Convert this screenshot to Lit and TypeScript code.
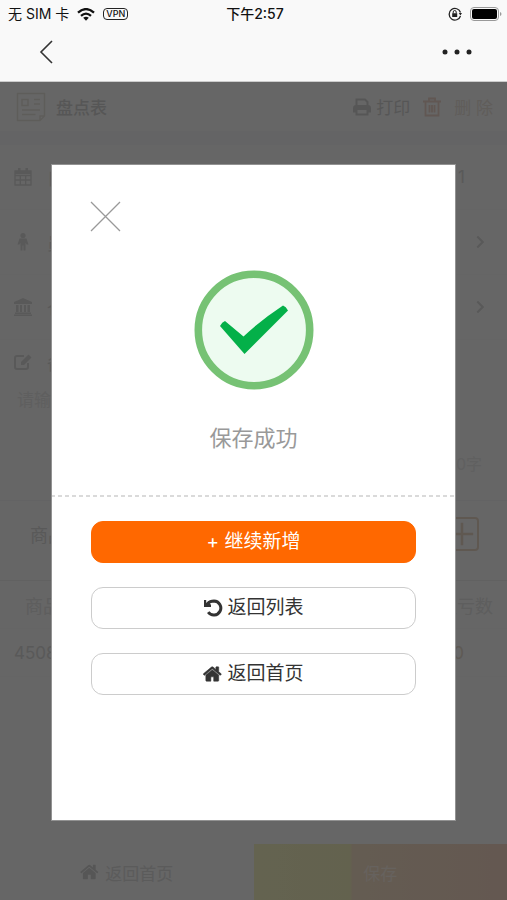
import { LitElement, html, css, svg } from "lit";
import { customElement } from "lit/decorators.js";

const homePath = svg`<path d="M1408 992v480q0 26-19 45t-45 19h-384v-384h-256v384h-384q-26 0-45-19t-19-45v-480q0-1 .5-3t.5-3l575-474 575 474q1 2 1 6zm223-69l-62 74q-8 9-21 11h-3q-13 0-21-7l-692-577-692 577q-12 8-24 7-13-2-21-11l-62-74q-8-10-7-23.5t11-21.5l719-599q32-26 76-26t76 26l244 204v-195q0-14 9-23t23-9h192q14 0 23 9t9 23v408l219 182q10 8 11 21.5t-7 23.5z"/>`;
const undoShape = svg`<path fill="none" stroke="currentColor" stroke-width="3" d="M4.500 5.800Q7 3 11 3A7 7 0 1 1 5.200 14.200"/><path d="M1 2h2.200v3L5 4.300l3 2.500V9H1z"/>`;

const icon = (shape: unknown, box = "0 0 20 20") =>
  html`<svg class="icon" viewBox=${box} aria-hidden="true">${shape}</svg>`;

const calendar = svg`<path fill="none" stroke="currentColor" stroke-width="1.300" d="M2 4h16v14H2zM2 8.500h16M7.300 8.500V18M12.700 8.500V18M2 13h16"/><path d="M5 1h2.500v5H5zM12.500 1H15v5h-2.500zM2 4h16v3H2z"/>`;
const person = svg`<circle cx="10" cy="3.500" r="2.600"/><path d="M6.500 6.500h7l2 6h-2l-1-2v8h-2v-5h-1v5h-2v-8l-1 2h-2z"/>`;
const bank = svg`<path d="M10 1l9 4v2H1V5zM3 8h2.500v7H3zM7 8h2v7H7zM11 8h2v7h-2zM14.500 8H17v7h-2.500zM2 15.500h16v1.500H2zM1 17.500h18V19H1z"/>`;
const edit = svg`<path fill="none" stroke="currentColor" stroke-width="2" d="M15 11v4q0 2-2 2H4q-2 0-2-2V6q0-2 2-2h7"/><path d="M8 10l7.500-7.500 3 3L11 13H8z"/>`;
const printer = svg`<path fill="none" stroke="currentColor" stroke-width="2" d="M4.500 9V2.500h8.500L15.500 5v4M4.500 13v4.500h11V13"/><path d="M1 11q0-3 3-3h12q3 0 3 3v4.500h-3V13H4v2.500H1z"/>`;
const trash = svg`<path fill="none" stroke="currentColor" stroke-width="1.800" d="M1 4.500h18M7 4V1.500h6V4M3.500 5v13.500h13V5M7.500 8v7.500M10 8v7.500M12.500 8v7.500"/>`;
const ledger = svg`<path fill="none" stroke="currentColor" stroke-width="1" d="M1 1h18v15l-3 3H1zM4 5h4v4H4zM12 5h4M12 8h4M4 12h12M4 15h9M19 16h-3v3"/>`;
const chevron = svg`<path fill="none" stroke="currentColor" stroke-width="2.400" d="M7 4l6 6-6 6"/>`;

@customElement("app-root")
export class AppRoot extends LitElement {
  static styles = css`
    :host {
      display: flex;
      flex-direction: column;
      min-height: 100vh;
      background: #fff;
      font-family: Inter, "Noto Sans CJK SC", sans-serif;
      font-size: 17px;
      color: #333;
    }
    * { box-sizing: border-box; }
    button, textarea {
      font: inherit;
      color: inherit;
      background: none;
      border: 0;
      padding: 0;
      margin: 0;
    }
    button { cursor: pointer; display: flex; align-items: center; justify-content: center; }
    .icon { width: 20px; height: 20px; fill: currentColor; flex: none; display: block; }

    .status {
      display: grid;
      grid-template-columns: 1fr auto 1fr;
      align-items: center;
      height: 28px;
      padding: 0 5px 0 8px;
      background: #f9f9f9;
      color: #111;
      font-size: 14px;
      line-height: 20px;
    }
    .carrier, .power { display: flex; align-items: center; gap: 8px; }
    .power { justify-content: flex-end; }
    .clock { font-weight: 500; }
    .wifi { width: 18px; height: 13px; }
    .vpn {
      border: 1px solid #222;
      border-radius: 4px;
      padding: 0 2px;
      font-size: 9px;
      line-height: 10px;
      font-weight: 500;
    }
    .lock { width: 14px; height: 14px; }
    .battery { width: 32px; height: 14px; }

    .nav {
      display: flex;
      align-items: center;
      justify-content: space-between;
      height: 54px;
      padding: 0 34px 6px 38px;
      background: #f9f9f9;
      border-bottom: 1px solid #ccc;
    }
    .back svg { width: 16px; height: 26px; display: block; }
    .more svg { width: 32px; height: 10px; display: block; }

    .stage { flex: 1; display: grid; }
    .page, .backdrop { grid-area: 1 / 1; min-width: 0; }
    .page { display: flex; flex-direction: column; background: #fff; color: #dedede; }
    .backdrop { position: relative; display: grid; background: rgba(0, 0, 0, 0.6); }

    .title {
      display: flex;
      align-items: center;
      height: 49px;
      padding: 0 14px;
      gap: 8px;
      color: #d8d8d8;
    }
    .title h1 { flex: 1; margin: 0; font-size: 17px; font-weight: 500; }
    .ledger { color: #ece8e2; }
    .ledger .icon { width: 34px; height: 30px; }
    .tool { gap: 4px; }
    .delete { margin-left: 4px; gap: 12px; color: #f2dacf; }
    .delete-text { color: #f0e8e2; }
    .band { height: 14px; background: #fafafd; }

    .row {
      display: flex;
      align-items: center;
      gap: 14px;
      height: 65px;
      padding: 0 18px 0 13px;
      border-bottom: 1px solid #fdfdfd;
    }
    .row .name { flex: 1; }
    .row .chevron .icon { width: 18px; height: 18px; }
    .date { padding-right: 42px; }
    .note { height: 44px; border: 0; }
    textarea { resize: none; display: block; width: 100%; height: 68px; padding: 4px 17px; line-height: 24px; }
    textarea::placeholder { color: #ededed; opacity: 1; }
    .count { padding: 0 25px 0 0; text-align: right; line-height: 24px; color: #efefef; font-size: 16px; }

    .goods {
      display: flex;
      align-items: center;
      justify-content: space-between;
      height: 66px;
      margin-top: 24px;
      padding: 0 28px 0 30px;
      border-top: 1px solid #f8f8fb;
    }
    .goods h2 { margin: 0; font-size: 18px; font-weight: 400; }
    .add {
      width: 34px;
      height: 34px;
      border: 2px solid #eedccb;
      border-radius: 4px;
      color: #eedccb;
    }
    .add .icon { width: 28px; height: 28px; }
    table { width: 100%; margin-top: 14px; border-top: 1px solid #f2f2f2; border-collapse: collapse; }
    th, td { height: 48px; padding: 0 14px; font-weight: 400; text-align: left; border-bottom: 1px solid #fcfcfc; }
    th { color: #eaeaea; padding-left: 25px; font-size: 18px; }
    .end { text-align: right; }
    td.end { padding-right: 43px; color: #eae0d2; }

    .footer { display: grid; grid-template-columns: 1fr 1fr; height: 56px; margin-top: auto; color: #e4e4e4; }
    .footer button { gap: 5px; }
    .footer .icon { color: #d8d8d8; }
    .footer .save { background: linear-gradient(90deg, #f9f8c8, #f8f4c4 38%, #fbe6cc 39%, #fbdccb); color: #fff4ea; }

    .modal {
      display: flex;
      flex-direction: column;
      margin: 82px 10% 79px;
      background: #fff;
      outline: 1px solid #929292;
      outline-offset: -1px;
    }
    .result {
      display: flex;
      flex-direction: column;
      align-items: center;
      padding: 36px 0 43px;
      background: repeating-linear-gradient(90deg, #dadada 0 4px, #fff 4px 7px) bottom / 100% 2px no-repeat;
    }
    .close { align-self: flex-start; margin-left: 38px; }
    .close svg { width: 32px; height: 32px; display: block; }
    .check { width: 120px; height: 120px; margin: 38px 0 32px; }
    .message { margin: 0; font-size: 22px; line-height: 32px; color: #999; font-weight: 400; }
    .actions { display: flex; flex-direction: column; gap: 24px; padding: 24px 10%; }
    .action {
      height: 42px;
      gap: 4px;
      border: 1px solid #ccc;
      border-radius: 12px;
      font-size: 19px;
      line-height: 28px;
    }
    .action .home { display: contents; stroke: #333; stroke-width: 50px; }
    .primary { border-color: #ff6800; background: #ff6800; color: #fff; }
  `;

  private row(shape: unknown, name: string) {
    return html`<div class="row">
      ${icon(shape)}<span class="name">${name}</span><span class="chevron">${icon(chevron)}</span>
    </div>`;
  }

  render() {
    return html`
      <div class="status">
        <div class="carrier">
          <span>无 SIM 卡</span>
          <svg class="wifi" viewBox="0 0 18 13" aria-hidden="true">
            <g fill="none" stroke="#111" stroke-width="2.300">
              <path d="M1 4.600q8-7 16 0M4 7.800q5-4.400 10 0"/>
            </g>
            <path fill="#111" d="M6.200 9.800q2.800-2.200 5.600 0L9 12.800z"/>
          </svg>
          <span class="vpn">VPN</span>
        </div>
        <span class="clock">下午2:57</span>
        <div class="power">
          <svg class="lock" viewBox="0 0 14 14" aria-hidden="true">
            <path fill="none" stroke="#222" stroke-width="1.300" d="M12.500 5.500A5.800 5.800 0 1 0 12.500 9"/>
            <path fill="#222" d="M10.800 6h3.200l-1.600 2.400zM4.200 6.300h5v3.700h-5z"/>
            <path fill="none" stroke="#222" d="M5.200 6.500V5q0-1.500 1.500-1.500T8.200 5v1.500"/>
          </svg>
          <svg class="battery" viewBox="0 0 32 14" aria-hidden="true">
            <rect x=".5" y=".5" width="28" height="13" rx="3.500" fill="none" stroke="#999"/>
            <rect x="2" y="2" width="25" height="10" rx="2" fill="#000"/>
            <path fill="#999" d="M30 5q1.500.5 1.500 2T30 9z"/>
          </svg>
        </div>
      </div>
      <nav class="nav">
        <button class="back" aria-label="返回">
          <svg viewBox="0 0 16 26"><path fill="none" stroke="#333" stroke-width="1.600" d="M14 2L3 13l11 11"/></svg>
        </button>
        <button class="more" aria-label="更多">
          <svg viewBox="0 0 32 10"><g fill="#222"><circle cx="4" cy="5" r="2.500"/><circle cx="16" cy="5" r="2.500"/><circle cx="28" cy="5" r="2.500"/></g></svg>
        </button>
      </nav>
      <div class="stage">
        <main class="page">
          <header class="title">
            <span class="ledger">${icon(ledger)}</span>
            <h1>盘点表</h1>
            <button class="tool">${icon(printer)}打印</button>
            <button class="tool delete">${icon(trash)}<span class="delete-text">删 除</span></button>
          </header>
          <div class="band"></div>
          <div class="row date">${icon(calendar)}<span class="name">日期</span><span>1</span></div>
          ${this.row(person, "员工")}
          ${this.row(bank, "仓库")}
          <label class="row note" for="note">${icon(edit)}<span class="name">备注</span></label>
          <textarea id="note" placeholder="请输入备注"></textarea>
          <div class="count">0字</div>
          <section class="goods">
            <h2>商品</h2>
            <button class="add" aria-label="添加商品">
              ${icon(svg`<path fill="none" stroke="currentColor" stroke-width="1.800" d="M10 2v16M2 10h16"/>`)}
            </button>
          </section>
          <table>
            <thead><tr><th>商品</th><th class="end">盈亏数</th></tr></thead>
            <tbody><tr><td>4508</td><td class="end">0</td></tr></tbody>
          </table>
          <footer class="footer">
            <button>${icon(homePath, "0 0 1792 1792")}返回首页</button>
            <button class="save">保存</button>
          </footer>
        </main>
        <div class="backdrop">
          <section class="modal" role="dialog" aria-labelledby="message">
            <div class="result">
              <button class="close" aria-label="关闭">
                <svg viewBox="0 0 32 32"><path fill="none" stroke="#999" stroke-width="1.300" d="M2 2l29 29M31 2L2 31"/></svg>
              </button>
              <svg class="check" viewBox="0 0 120 120" aria-hidden="true">
                <circle cx="60" cy="60" r="55.700" fill="#edfbf0" stroke="#76c274" stroke-width="7.600"/>
                <path fill="#04b049" d="M26 56q2-4 5-5L49.500 66.500Q67 50 89 35.500q3 1 5 5L50.500 84z"/>
              </svg>
              <h2 class="message" id="message">保存成功</h2>
            </div>
            <div class="actions">
              <button class="action primary">+ 继续新增</button>
              <button class="action">${icon(undoShape)}返回列表</button>
              <button class="action"><span class="home">${icon(homePath, "0 0 1792 1792")}</span>返回首页</button>
            </div>
          </section>
        </div>
      </div>
    `;
  }
}
